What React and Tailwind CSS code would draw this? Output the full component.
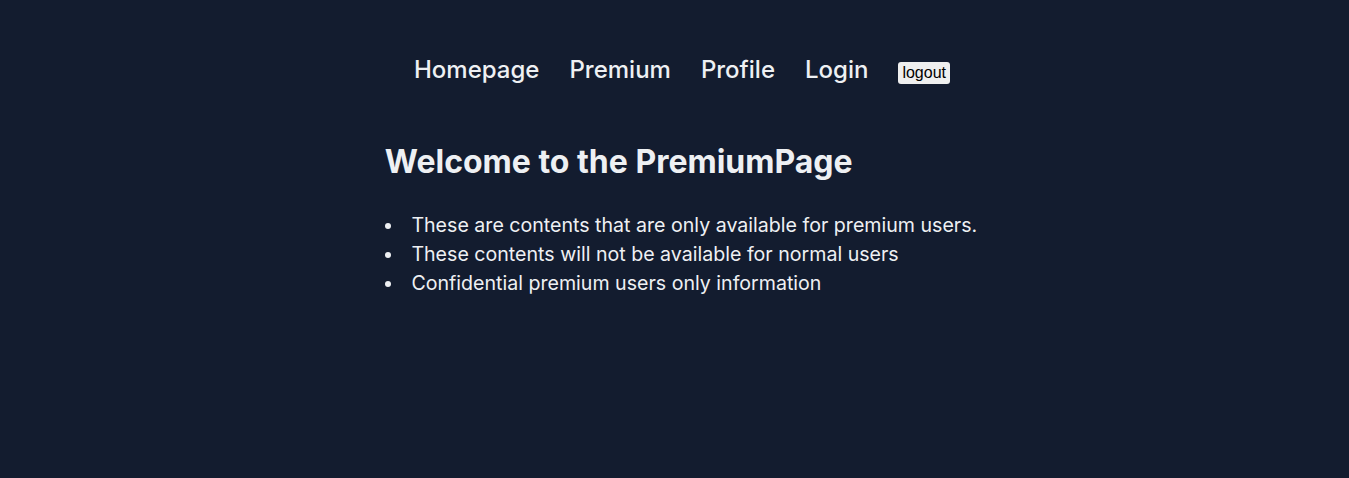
export default function App() {
  return (
    <div className="min-h-[478px] w-full bg-[#131c2f] text-[#eef0f3]" style={{ fontFamily: "Inter, 'Noto Sans', sans-serif" }}>
      <nav className="flex items-center justify-center gap-[30px] pt-[52px] pl-[15px]">
        <a className="text-[24px] font-medium leading-[36px]">Homepage</a>
        <a className="text-[24px] font-medium leading-[36px]">Premium</a>
        <a className="text-[24px] font-medium leading-[36px]">Profile</a>
        <a className="text-[24px] font-medium leading-[36px]">Login</a>
        <button className="mt-[6px] flex h-[22px] items-center rounded-[3px] bg-[#efefef] px-[4px] text-[16px] leading-[20px] text-black" style={{ fontFamily: "'Liberation Sans', Arial, sans-serif" }}>logout</button>
      </nav>
      <div className="flex justify-center pl-[13px]">
        <main className="mt-[54px] w-fit">
          <h1 className="text-[32px] font-bold leading-[40px]">Welcome to the PremiumPage</h1>
          <ul className="mt-[29px] list-inside list-disc text-[19.6px] leading-[29px]">
            <li>These are contents that are only available for premium users.</li>
            <li>These contents will not be available for normal users</li>
            <li>Confidential premium users only information</li>
          </ul>
        </main>
      </div>
    </div>
  );
}
